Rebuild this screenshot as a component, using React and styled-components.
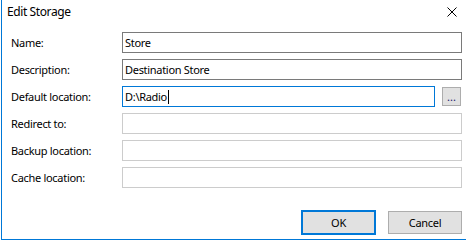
import * as React from "react"
import styled, { createGlobalStyle } from "styled-components"

const Global = createGlobalStyle`
    body {
        margin: 0;
        background: #ffffff;
        font-family: "Segoe UI", "Noto Sans", "Open Sans", sans-serif;
        font-size: 11px;
        letter-spacing: -0.3px;
        color: #000000;
    }
`

const Window = styled.div`
    box-sizing: border-box;
    margin-left: 1px;
    width: 465px;
    height: 240px;
    border-left: 1px solid #0078d7;
    border-bottom: 1px solid #0078d7;
    background: #ffffff;
    display: flex;
    flex-direction: column;
`

const TitleBar = styled.div`
    height: 32px;
    display: flex;
    align-items: flex-start;
    justify-content: space-between;
    padding: 3px 9px 0 5px;
    box-sizing: border-box;
    font-size: 12px;
    letter-spacing: -0.4px;
`

const Close = styled.div`
    margin-top: 4px;
    width: 10px;
    height: 10px;
    display: flex;
`

const Form = styled.div`
    display: grid;
    grid-template-columns: 111px 340px;
    grid-auto-rows: 21px;
    row-gap: 6px;
    padding-left: 9px;
    align-items: center;
`

const Label = styled.label`
    white-space: nowrap;
`

const Field = styled.div`
    box-sizing: border-box;
    height: 21px;
    flex: 1;
    border: 1px solid ${p => p.$focus ? "#0078d7" : p.$disabled ? "#cccccc" : "#7a7a7a"};
    padding: 0 2px;
    display: flex;
    align-items: center;
    white-space: nowrap;
`

const Caret = styled.span`
    display: inline-block;
    width: 1px;
    height: 14px;
    background: #000;
    margin-left: 1px;
`

const FieldRow = styled.div`
    display: flex;
    align-items: center;
    gap: 7px;
    padding-right: 1px;
`

const Browse = styled.div`
    box-sizing: border-box;
    width: 19px;
    height: 19px;
    background: #e1e1e1;
    border: 1px solid #adadad;
    display: flex;
    justify-content: center;
    align-items: flex-end;
    padding-bottom: 3px;
    line-height: 1;
    letter-spacing: 0;
    color: #1a1a6a;
`

const Footer = styled.div`
    display: flex;
    justify-content: flex-end;
    align-items: center;
    gap: 12px;
    padding: 22px 4px 0 0;
`

const Button = styled.div`
    box-sizing: border-box;
    width: ${p => p.$primary ? "75px" : "74px"};
    height: ${p => p.$primary ? "25px" : "23px"};
    background: #e1e1e1;
    border: ${p => p.$primary ? "2px solid #0078d7" : "1px solid #adadad"};
    display: flex;
    align-items: center;
    justify-content: center;
`

const fields = [
    { label: "Name:", value: "Store" },
    { label: "Description:", value: "Destination Store" },
    { label: "Default location:", value: "D:\\Radio", focus: true, browse: true },
    { label: "Redirect to:", disabled: true },
    { label: "Backup location:", disabled: true },
    { label: "Cache location:", disabled: true },
]

export default function App() {
    return <>
        <Global />
        <Window>
            <TitleBar>
                <span>Edit Storage</span>
                <Close>
                    <svg width="10" height="10" viewBox="0 0 10 10">
                        <path d="M0.5 0.5 L9.5 9.5 M9.5 0.5 L0.5 9.5" stroke="#000" strokeWidth="1" />
                    </svg>
                </Close>
            </TitleBar>
            <Form>
                {fields.map(f => (
                    <React.Fragment key={f.label}>
                        <Label>{f.label}</Label>
                        {f.browse ? (
                            <FieldRow>
                                <Field $focus>{f.value}<Caret /></Field>
                                <Browse>...</Browse>
                            </FieldRow>
                        ) : (
                            <Field $disabled={f.disabled}>{f.value}</Field>
                        )}
                    </React.Fragment>
                ))}
            </Form>
            <Footer>
                <Button $primary>OK</Button>
                <Button>Cancel</Button>
            </Footer>
        </Window>
    </>
}
